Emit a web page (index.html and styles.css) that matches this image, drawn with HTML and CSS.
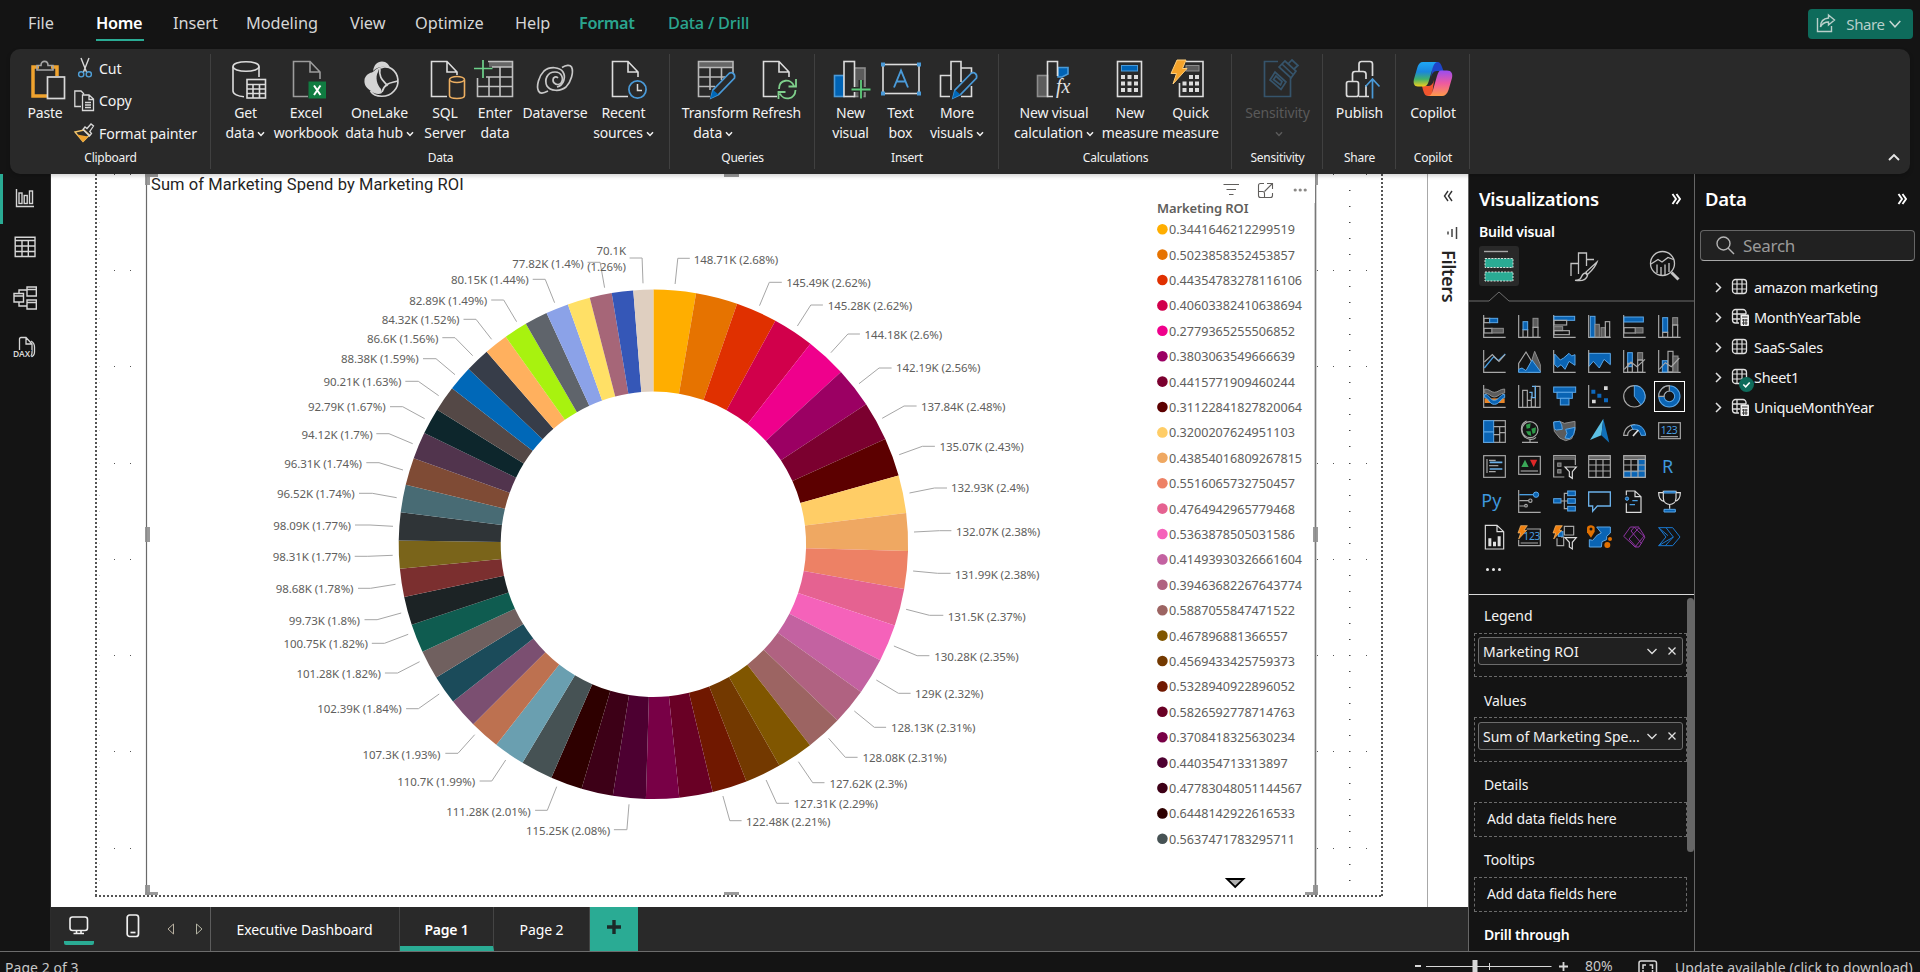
FILE: index.html
```html
<!DOCTYPE html>
<html lang="en">
<head>
<meta charset="utf-8">
<title>Report</title>
<link rel="stylesheet" href="styles.css">
</head>
<body>
<svg class="defs" width="0" height="0">
  <defs>
    <linearGradient id="cpA" x1="0" y1="0" x2="0" y2="1"><stop offset="0" stop-color="#1ea7f5"/><stop offset=".4" stop-color="#1a86dd"/><stop offset=".7" stop-color="#41b06a"/><stop offset="1" stop-color="#f2cf1c"/></linearGradient>
    <linearGradient id="cpB" x1="0" y1="0" x2="0" y2="1"><stop offset="0" stop-color="#9a4df0"/><stop offset=".5" stop-color="#ee5aa0"/><stop offset="1" stop-color="#ff9a4a"/></linearGradient>
    <symbol id="chev" viewBox="0 0 8 6"><path d="M1 1.2L4 4.4L7 1.2" fill="none" stroke="currentColor" stroke-width="1.5"/></symbol>
    <symbol id="expand" viewBox="0 0 10 12"><path d="M1.5 1L5 6L1.5 11M5.5 1L9 6L5.5 11" fill="none" stroke="currentColor" stroke-width="1.9"/></symbol>
    <symbol id="tbl" viewBox="0 0 18 18"><rect x="1.5" y="1.5" width="14" height="14" rx="3" fill="none" stroke="#e0e0e0" stroke-width="1.3"/><path d="M6 1.5V15.5M11 1.5V15.5M1.5 6H15.5M1.5 11H15.5" stroke="#e0e0e0" stroke-width="1.2"/></symbol>
    <symbol id="tblc" viewBox="0 0 18 18"><path d="M15 6V4.500a3 3 0 0 0-3-3H4.500a3 3 0 0 0-3 3V12a3 3 0 0 0 3 3H8M6 1.500V15M1.500 6H15M1.500 11H9" fill="none" stroke="#e0e0e0" stroke-width="1.3"/><rect x="9.500" y="6.500" width="8.500" height="11.500" rx="1" fill="#f0f0f0"/><path d="M11 9H16.500M11 12H16.500M11 15H16.500M12.600 11V17M15 11V17" stroke="#333" stroke-width="1"/></symbol>
  </defs>
</svg>

<header class="tabs">
  <nav class="menu">
    <span class="m file">File</span><span class="m home">Home</span><span class="m insert">Insert</span><span class="m modeling">Modeling</span><span class="m view">View</span><span class="m optimize">Optimize</span><span class="m help">Help</span><span class="m ctx format">Format</span><span class="m ctx drill">Data / Drill</span>
  </nav>
  <button class="share">
    <svg width="20" height="20" viewBox="0 0 20 20" fill="none" stroke="#b9cfca" stroke-width="1.4"><path d="M1.500 4V17.500H15.500V12M12.500 1L18.500 6L12.500 11V8C8.500 8 6 10 4.500 13C4.500 8 7.500 4.500 12.500 4Z"/></svg>
    <span>Share</span>
    <svg width="12" height="8" viewBox="0 0 12 8" fill="none" stroke="#c5d6d2" stroke-width="1.5"><path d="M.7 1L6 6.800L11.300 1"/></svg>
  </button>
</header>

<section class="ribbon">
  <div class="group clip">
    <div class="btns">
      <div class="b"><svg class="ic" viewBox="0 0 40 40" fill="none"><path d="M14 7H8V36H24M26 7H32V16" stroke="#f0a32e" stroke-width="3.500"/><path d="M12 10V5.500H16C16 0 23 0 23 5.500H28V10Z" stroke="#a6a6a6" stroke-width="1.600"/><rect x="22.500" y="17" width="17" height="21.500" fill="#292929" stroke="#d8d8d8" stroke-width="1.700"/></svg><span>Paste</span></div>
      <div class="small">
        <div><svg width="22" height="22" viewBox="0 0 22 22" fill="none" stroke-width="1.400"><path d="M7 1L12.500 15M15 1L9.500 15" stroke="#d8d8d8"/><circle cx="7.200" cy="17.300" r="2.600" stroke="#4f9fd8"/><circle cx="14.800" cy="17.300" r="2.600" stroke="#4f9fd8"/></svg>Cut</div>
        <div><svg width="22" height="22" viewBox="0 0 22 22" fill="none" stroke="#d8d8d8" stroke-width="1.300"><path d="M7 16.500H.8V1H7L10 4M8.500 5H15L19.500 9V20.500H8.500ZM15 5V9.500H19.500M11 12.500H17M11 15H17M11 17.500H17"/></svg>Copy</div>
        <div><svg width="22" height="22" viewBox="0 0 22 22" fill="none"><path d="M1 10L9 19.500L15.500 13L10 8Z" fill="#2a2a2a" stroke="#f2c46b" stroke-width="1.300"/><path d="M3 12.500L14 14.500L9 20Z" fill="#f0a32e"/><path d="M9 7.500L15.500 14L17.500 11.500L15.800 9.500L19.500 4L17 2L13 6.500L11 5Z" stroke="#d8d8d8" stroke-width="1.300"/></svg>Format painter</div>
      </div>
    </div>
    <div class="gl">Clipboard</div>
  </div>

  <div class="group data">
    <div class="btns">
      <div class="b"><svg class="ic" viewBox="0 0 40 40" fill="none" stroke="#dcdcdc" stroke-width="1.600"><ellipse cx="20" cy="6.500" rx="13" ry="4.800"/><path d="M7 6.500V31C7 34 12 36.500 18 36.700M33 6.500V17"/><rect x="21" y="19.500" width="18.500" height="18.500" fill="#292929"/><path d="M21 24.500H39.500M21 29H39.500M21 33.500H39.500M27 24V38M33.500 24V38"/></svg><span>Get<br>data<svg class="cv"><use href="#chev"/></svg></span></div>
      <div class="b"><svg class="ic" viewBox="0 0 40 40" fill="none"><path d="M22 36.500H7.500V1.500H24L34 12V19M24 1.500V12H34" stroke="#9c9c9c" stroke-width="1.600"/><rect x="22.500" y="21.500" width="17.500" height="17" fill="#107c41"/><path d="M28 25.500L34.500 35M34.500 25.500L28 35" stroke="#fff" stroke-width="2"/></svg><span>Excel<br>workbook</span></div>
      <div class="b lake"><svg class="ic" viewBox="0 0 40 40" fill="none"><path d="M12 11C13 5 16 1.500 21 1.500C25.500 1.500 28 4.500 29 8C24 6 17 6 12 11Z" fill="#d4d4d4"/><path d="M11 12.500C16 8.500 19 9 17 12C14 17 16 25 20 29L21 33C18 35 13 34 10 31C5 28 3 24 3.500 20C3.500 17 7 13 11 12.500Z" fill="#d4d4d4"/><path d="M14 11C20 6 27 6 31 9C38 14 39 25 33 31C27 38 14 38 9.500 31M21 32C24 22 31 23 36.500 21M19 9C17 18 24 22 26.500 26" stroke="#d4d4d4" stroke-width="1.700"/></svg><span>OneLake<br>data hub<svg class="cv"><use href="#chev"/></svg></span></div>
      <div class="b"><svg class="ic" viewBox="0 0 40 40" fill="none"><path d="M22 36.500H6.500V1.500H22L32 12V15M22 1.500V12H32" stroke="#dcdcdc" stroke-width="1.600"/><path d="M24.500 20V35.500C24.500 39.500 39.500 39.500 39.500 35.500V20" stroke="#eeb062" stroke-width="1.600" fill="#292929"/><ellipse cx="32" cy="19.500" rx="7.500" ry="3" stroke="#eeb062" stroke-width="1.600" fill="#292929"/></svg><span>SQL<br>Server</span></div>
      <div class="b"><svg class="ic" viewBox="0 0 40 40" fill="none"><rect x="14" y="2" width="23" height="5" fill="#666" /><path d="M2.500 18V36.500H37.500V1.500H13M11 17H37.500M2.500 26.500H37.500M14 17V36.500M25 7.500V36.500M17 7H37.500" stroke="#c0c0c0" stroke-width="1.600"/><path d="M8 0V18M-1 8.500H17.500" stroke="#6dd28a" stroke-width="1.700"/></svg><span>Enter<br>data</span></div>
      <div class="b"><svg class="ic" viewBox="0 0 40 40" fill="none" stroke="#c8c8c8" stroke-width="1.700"><path d="M27 7.500C31 5 35 4.500 36.500 7C39 12 36 22 31 27C25 32 15 31 12 26C9 20 12 12 20 12C27 12 29 19 26 23C23 26 18 24 18 20C18 17 21 16 23 18"/><path d="M13 31C8 33.500 5 34 3.500 31C1 26 4 16 9 11C15 6 25 7 28 12C31 17 29 25 22 27"/></svg><span>Dataverse</span></div>
      <div class="b"><svg class="ic" viewBox="0 0 40 40" fill="none"><path d="M24 36.500H8.500V1.500H24L34 12V17M24 1.500V12H34" stroke="#dcdcdc" stroke-width="1.600"/><circle cx="33.500" cy="29.500" r="8.600" stroke="#4a9ad8" stroke-width="1.700"/><path d="M33.500 24V30.500H38" stroke="#dcdcdc" stroke-width="1.500"/></svg><span>Recent<br>sources<svg class="cv"><use href="#chev"/></svg></span></div>
    </div>
    <div class="gl">Data</div>
  </div>

  <div class="group queries">
    <div class="btns">
      <div class="b"><svg class="ic" viewBox="0 0 40 40" fill="none"><rect x="4" y="2" width="34" height="5" fill="#666"/><path d="M15 36.500H3.500V1.500H38V14M3.500 7.500H38M3.500 17H30M3.500 26.500H20M15 7.500V30M26.500 7.500V20" stroke="#b8b8b8" stroke-width="1.600"/><path d="M34 13.500L18 30L16 38L23.500 34.500L39.500 18C40.500 14 37 11.500 34 13.500Z" fill="#292929" stroke="#4a9ad8" stroke-width="1.700"/><path d="M18 30L15.500 38.500L23.500 34.500Z" fill="#0068b8"/></svg><span>Transform<br>data<svg class="cv"><use href="#chev"/></svg>&nbsp;</span></div>
      <div class="b"><svg class="ic" viewBox="0 0 40 40" fill="none"><path d="M20 36.500H6.500V1.500H22L32 12V17M22 1.500V12H32" stroke="#dcdcdc" stroke-width="1.600"/><path d="M22 29C22 19 34 18 37 26M39 19V26.500H31.500M38.500 30C38 40 26 41 23 33.500M21.500 39V32H28.500" stroke="#7fd08c" stroke-width="1.800"/></svg><span>Refresh</span></div>
    </div>
    <div class="gl">Queries</div>
  </div>

  <div class="group insert">
    <div class="btns">
      <div class="b"><svg class="ic" viewBox="0 0 40 40" fill="none" stroke-width="1.600"><rect x="23" y="8" width="11" height="28.500" fill="#5c5c5c" stroke="#8c8c8c"/><rect x="3.500" y="15.500" width="9.500" height="21" fill="#0063b5" stroke="#4a9ad8"/><rect x="13" y="1.500" width="10.500" height="35" fill="#292929" stroke="#dcdcdc"/><path d="M30 20V38.500M20.500 29.500H39.500" stroke="#292929" stroke-width="5"/><path d="M30 20V38.500M20.500 29.500H39.500" stroke="#5dcc7a" stroke-width="1.800"/></svg><span>New<br>visual</span></div>
      <div class="b"><svg class="ic" viewBox="0 0 40 40" fill="none"><rect x="2" y="4.500" width="36" height="29" stroke="#dcdcdc" stroke-width="1.600"/><path d="M0 2.500h4v4h-4zM36 2.500h4v4h-4zM0 31.500h4v4h-4zM36 31.500h4v4h-4z" fill="#4a9ad8"/><path d="M13 27.500L20 10.500L27 27.500M15.500 21.500H24.500" stroke="#4a9ad8" stroke-width="1.900"/></svg><span>Text<br>box</span></div>
      <div class="b"><svg class="ic" viewBox="0 0 40 40" fill="none" stroke-width="1.600"><path d="M13 36.500H3.500V15.500H13.500M14 30V1.500H24V22M24 8H34.500V14M34.500 26V36.500H24" stroke="#dcdcdc"/><path d="M34 13.500L18 30L16 38L23.500 34.500L39.500 18C40.500 14 37 11.500 34 13.500Z" fill="#292929" stroke="#4a9ad8" stroke-width="1.700"/><path d="M18 30L15.500 38.500L23.500 34.500Z" fill="#0068b8"/></svg><span>More<br>visuals<svg class="cv"><use href="#chev"/></svg></span></div>
    </div>
    <div class="gl">Insert</div>
  </div>

  <div class="group calc">
    <div class="btns">
      <div class="b"><svg class="ic" viewBox="0 0 40 40" fill="none" stroke-width="1.600"><path d="M24 7.500H34V14L28 17H24Z" fill="#0063b5" stroke="#4a9ad8"/><rect x="3.500" y="15.500" width="10" height="21" fill="#5c5c5c" stroke="#8c8c8c"/><path d="M23.500 16V1.500H13.500V36.500H19" stroke="#dcdcdc"/><text x="22" y="33" class="fx">fx</text></svg><span>New visual<br>calculation<svg class="cv"><use href="#chev"/></svg></span></div>
      <div class="b"><svg class="ic" viewBox="0 0 40 40" fill="none"><rect x="7.500" y="1.500" width="24" height="35" stroke="#dcdcdc" stroke-width="1.600"/><rect x="11.500" y="5.500" width="16" height="5.500" fill="#0063b5" stroke="#4a9ad8"/><path d="M11 15h4v4h-4zM17.500 15h4v4h-4zM24 15h4v4h-4zM11 21.500h4v4h-4zM17.500 21.500h4v4h-4zM24 21.500h4v4h-4zM11 28h4v4h-4zM17.500 28h4v4h-4zM24 28h4v4h-4z" fill="#dcdcdc"/></svg><span>New<br>measure</span></div>
      <div class="b"><svg class="ic" viewBox="0 0 40 40" fill="none"><path d="M15 1.500H32V36.500H8.500V23" stroke="#dcdcdc" stroke-width="1.600"/><rect x="15" y="5.500" width="13" height="5.500" fill="#5c5c5c" stroke="#8c8c8c"/><path d="M18 15h4v4h-4zM24 15h4v4h-4zM11.500 21.500h4v4h-4zM18 21.500h4v4h-4zM24 21.500h4v4h-4zM11.500 28h4v4h-4zM18 28h4v4h-4zM24 28h4v4h-4z" fill="#dcdcdc"/><path d="M6 0H15L11.500 8.500H16L2 24L5.500 13.500H0Z" fill="#f5a32a" stroke="#ffce7a"/></svg><span>Quick<br>measure</span></div>
    </div>
    <div class="gl">Calculations</div>
  </div>

  <div class="group one">
    <div class="btns">
      <div class="b off"><svg class="ic" viewBox="0 0 40 40" fill="none" stroke="#36546b" stroke-width="1.700"><path d="M20 1.500H6.500V36.500H32.500V18"/><path d="M12 20L17 12L28 22L23 29.500ZM15.500 19.500L18 16L24 21.500L22.500 25Z"/><path d="M21 7L27 1L38 11L33 18ZM24.500 4.500L35.500 15M30 4L34 0L40 5.500L36 9"/></svg><span>Sensitivity<br><svg class="cv"><use href="#chev"/></svg></span></div>
    </div>
    <div class="gl">Sensitivity</div>
  </div>
  <div class="group two">
    <div class="btns">
      <div class="b"><svg class="ic" viewBox="0 0 40 40" fill="none" stroke="#dcdcdc" stroke-width="1.700"><rect x="6.500" y="21.500" width="12" height="15" rx="2"/><path d="M12.500 21V14C12.500 12.500 13.500 11.500 15 11.500H23C25 11.500 26 12.500 26 14V19M19 36.500H29M19 11V4C19 2.500 20 1.500 21.500 1.500H30C31.500 1.500 32.500 2.500 32.500 4V16M26 25V36"/><path d="M32.500 38.500V19M25.500 26.500L32.500 19L39.500 26.500" stroke="#4a9ad8"/></svg><span>Publish</span></div>
    </div>
    <div class="gl">Share</div>
  </div>
  <div class="group two last">
    <div class="btns">
      <div class="b"><svg class="ic" viewBox="0 0 40 40"><path d="M20 2H24.500C27 2 28 4 29 7L30.500 11H24C20 11 19 14 18 18Z" fill="#1f45c9"/><path d="M19 36H15C12 36 11 33 10 30L9 26H15C18 26 20 24 21 20Z" fill="#f0552e"/><path d="M10 2H25C22 2 21 4 20 7L15.500 22C14.500 25 13 26.500 10 26.500H5C1 26.500 0 23 1 19L4.500 7C5.500 4 7 2 10 2Z" fill="url(#cpA)"/><path d="M28 10.500H34C38.500 10.500 40 14 39 18L35.500 30C34 34 32 36 29 36H14.500C18 36 19 33 20 30L24 16C25 12.500 26 10.500 28 10.500Z" fill="url(#cpB)"/></svg><span>Copilot</span></div>
    </div>
    <div class="gl">Copilot</div>
  </div>
  <svg class="collapse" viewBox="0 0 12 8"><path d="M1 7L6 2L11 7" fill="none" stroke="#e6e6e6" stroke-width="1.900"/></svg>
</section>

<main class="work">
  <aside class="rail">
    <div class="r on"><svg width="24" height="24" viewBox="0 0 24 24" fill="none" stroke="#d6d6d6" stroke-width="1.400"><path d="M3.500 3V20.500H21"/><rect x="6" y="7" width="3" height="10.500"/><rect x="11.200" y="9.500" width="3" height="8"/><rect x="16.500" y="5" width="3" height="12.500"/></svg></div>
    <div class="r"><svg width="24" height="24" viewBox="0 0 24 24" fill="none" stroke="#d6d6d6" stroke-width="1.400"><path d="M2.200 2.200H22V21.500H2.200ZM2.200 5.500H22M2.200 11H22M2.200 16.500H22M9 5.500V21.500M15.300 5.500V21.500"/></svg></div>
    <div class="r"><svg width="24" height="24" viewBox="0 0 24 24" fill="none" stroke="#d6d6d6" stroke-width="1.400"><path d="M1 7.500H10.500V16H1ZM1 10H10.500M14 1H23.300V10H14ZM14 3.500H23.300M14 14H23.300V23H14ZM14 16.500H23.300M6 7.500V4H14M6 16V20H14"/></svg></div>
    <div class="r"><svg width="26" height="24" viewBox="0 0 26 24" fill="none" stroke="#d6d6d6" stroke-width="1.300"><path d="M6.500 14V3C6.500 2 7 1.500 8 1.500H13L19 8V17C19 18.500 18.500 19.500 17.500 20M13 1.500V8H19M18 5C20.500 6.500 21.500 8 21.500 11V16C21.500 19 20 20.500 17.500 20.800"/><text class="dax" x="0" y="21">DAX</text></svg></div>
  </aside>

  <div class="center">
    <div class="stage">
      <svg class="canvas" id="canvas" viewBox="51 174 1376 733" width="1376" height="733"></svg>
      <div class="filters">
        <svg width="10" height="12" viewBox="0 0 10 12"><path d="M5 1L1.500 6L5 11M9 1L5.500 6L9 11" fill="none" stroke="#333" stroke-width="1.400"/></svg>
        <svg class="ff" width="12" height="12" viewBox="0 0 12 12"><path d="M10.500 0V12M6 2V10M2 4.500V7.500" fill="none" stroke="#444" stroke-width="1.500"/></svg>
        <span>Filters</span>
      </div>
    </div>
    <div class="pages">
      <div class="ctl">
        <div class="mon"><svg width="20" height="19" viewBox="0 0 20 19" fill="none" stroke="#f0f0f0" stroke-width="1.600"><rect x="1" y="1" width="17.500" height="13.500" rx="2.500"/><path d="M7.500 14.500V17.500M12 14.500V17.500M4.500 17.500H15"/></svg></div>
        <svg class="phone" width="14" height="24" viewBox="0 0 14 24" fill="none" stroke="#f0f0f0" stroke-width="1.700"><rect x="1.200" y="1" width="11.300" height="21.500" rx="2.500"/><path d="M4.500 18.500H9.500"/></svg>
        <svg class="tri" width="8" height="12" viewBox="0 0 8 12" fill="none" stroke="#b8b0a0"><path d="M6.500 1V11L1 6Z"/></svg>
        <svg class="tri2" width="8" height="12" viewBox="0 0 8 12" fill="none" stroke="#b4b4a4"><path d="M1.500 1V11L7 6Z"/></svg>
      </div>
      <div class="pg p1">Executive Dashboard</div>
      <div class="pg p2">Page 1</div>
      <div class="pg p3">Page 2</div>
      <div class="add"><svg width="14" height="14" viewBox="0 0 14 14"><path d="M7 0V14M0 7H14" stroke="#1c2a28" stroke-width="3.400"/></svg></div>
    </div>
  </div>

  <section class="viz">
    <div class="ph"><h2>Visualizations</h2><svg width="10" height="12"><use href="#expand"/></svg></div>
    <h3>Build visual</h3>
    <div class="modes">
      <div class="mode sel"><svg width="30" height="32" viewBox="0 0 30 32"><path d="M0 1.500H24" stroke="#a8a8a8" stroke-width="1.400"/><rect x="1" y="8.500" width="28" height="9" fill="#2aab94" stroke="#d8ded9" stroke-dasharray="2 1.200"/><rect x="1" y="22" width="28" height="9" fill="#2aab94" stroke="#d8ded9" stroke-dasharray="2 1.200"/></svg></div>
      <svg class="m2" width="28" height="30" viewBox="0 0 28 30" fill="none" stroke="#c4c4c4" stroke-width="1.300"><path d="M1 24V11.500H8.500M8.500 22V1H16.500V14M16.500 7.500H24M27 10L16 20L17.500 22.500C20 20 25 16 27 10ZM15.500 21C12 21 12 25 10 27C9 28 7 28.300 5 28.300C9 29 16 29 17.500 23.500Z"/></svg>
      <svg class="m3" width="32" height="32" viewBox="0 0 32 32" fill="none" stroke="#c4c4c4" stroke-width="1.300"><circle cx="13.500" cy="13.500" r="12"/><path d="M2 14L9 9.500L13 12L19 7.500L24.500 9.500M8 14.500V23M12 17V25.500M16 14.500V25M20 13V22"/><path d="M22.500 22.500L29.500 29.500" stroke-width="3"/></svg>
    </div>
    <svg class="notch" width="225" height="11" viewBox="0 0 225 11"><path d="M0 10H20L30 1L40 10H225" fill="none" stroke="#6c6c6c" stroke-width="1"/></svg>
    <div class="grid" id="grid">
      <svg viewBox="0 0 69 69"><path class="a" d="M2 0V67H68"/><rect class="g" x="3" y="10" width="17" height="13"/><rect class="b" x="20" y="10" width="24" height="13"/><rect class="g" x="3" y="40" width="24" height="14"/><rect class="d" x="27" y="40" width="34" height="14"/></svg>
      <svg viewBox="0 0 69 69"><path class="a" d="M2 0V67H68"/><rect class="g" x="15" y="44" width="14" height="23"/><rect class="b" x="15" y="20" width="14" height="24"/><rect class="d" x="45" y="10" width="15" height="27"/><rect class="g" x="45" y="37" width="15" height="30"/></svg>
      <svg viewBox="0 0 69 69"><path class="a" d="M2 0V67H68"/><rect class="b" x="3" y="4" width="62" height="12"/><rect class="g" x="3" y="16" width="38" height="14"/><rect class="d" x="3" y="35" width="26" height="12"/><rect class="g" x="3" y="47" width="46" height="12"/></svg>
      <svg viewBox="0 0 69 69"><path class="a" d="M2 0V67H68"/><rect class="b" x="7" y="4" width="14" height="62"/><rect class="d" x="21" y="28" width="13" height="38"/><rect class="d" x="39" y="38" width="13" height="28"/><rect class="g" x="52" y="20" width="13" height="46"/></svg>
      <svg viewBox="0 0 69 69"><path class="a" d="M2 0V67H68"/><rect class="b" x="3" y="6" width="58" height="15"/><rect class="g" x="3" y="38" width="34" height="16"/><rect class="d" x="37" y="38" width="23" height="16"/></svg>
      <svg viewBox="0 0 69 69"><path class="a" d="M2 0V67H68"/><rect class="b" x="14" y="8" width="15" height="44"/><rect class="g" x="14" y="52" width="15" height="15"/><rect class="d" x="44" y="8" width="15" height="22"/><rect class="g" x="44" y="30" width="15" height="37"/></svg>

      <svg viewBox="0 0 69 69"><path class="a" d="M2 0V67H68"/><path class="lb" d="M4 54L32 20L46 32L67 12"/><path class="g" d="M4 36L28 14L48 34L66 14"/></svg>
      <svg viewBox="0 0 69 69"><path class="d" d="M30 67L50 4L67 44V67Z"/><path class="g" d="M2 67V40L24 6L42 36"/><path class="b" d="M2 67V58L12 54L24 62L42 30L67 64V67Z"/></svg>
      <svg viewBox="0 0 69 69"><path class="a" d="M2 0V67H68"/><path class="b" d="M5 12L22 30L32 24L48 10L56 18L66 14V46L48 34L36 58L24 44L14 52L5 44Z"/></svg>
      <svg viewBox="0 0 69 69"><path class="b" d="M2 10H67V44L48 28L34 54L16 34L2 50Z"/><path class="a" d="M2 0V67H68"/></svg>
      <svg viewBox="0 0 69 69"><path class="a" d="M2 0V67H68"/><rect class="b" x="14" y="8" width="14" height="42"/><rect class="g" x="14" y="40" width="14" height="27"/><rect class="d" x="44" y="8" width="15" height="22"/><rect class="g" x="44" y="30" width="15" height="37"/><path class="g" d="M4 58L24 36L42 50L66 28"/></svg>
      <svg viewBox="0 0 69 69"><path class="a" d="M2 0V67H68"/><rect class="b" x="13" y="32" width="16" height="34"/><rect class="g" x="30" y="4" width="15" height="62"/><rect class="d" x="45" y="18" width="15" height="48"/><path class="g" d="M4 58L22 38L40 50L64 24"/></svg>

      <svg viewBox="0 0 69 69"><path class="a" d="M2 0V67H68"/><path d="M5 40H65V54H5Z" fill="#e8862a"/><path class="d" d="M5 12C20 12 24 22 34 22C46 22 50 12 65 12V24C50 24 46 36 34 36C22 36 20 24 5 24Z"/><path class="b" d="M5 28C20 28 20 46 34 46C48 46 50 28 65 28V38C54 38 50 58 34 58C18 58 18 38 5 38Z"/></svg>
      <svg viewBox="0 0 69 69"><path class="a" d="M2 0V67H68"/><path class="g" d="M14 66V16H28V66M28 46H40V66M52 66V4H66V66M52 66H40V34"/><path d="M42 4H52V38H42V22H34" fill="none" stroke="#6bb0e8" stroke-width="4"/></svg>
      <svg viewBox="0 0 69 69"><rect class="b" x="2" y="6" width="66" height="16"/><rect class="b" x="12" y="22" width="46" height="18"/><rect class="b" x="22" y="40" width="26" height="20"/></svg>
      <svg viewBox="0 0 69 69"><path class="a" d="M2 0V67H68"/><path d="M10 14h12v12h-12zM28 26h12v12h-12zM48 40h12v12h-12z" fill="#0d68bd"/><path d="M48 4h11v11h-11zM12 44h11v11h-11z" fill="#d8d8d8"/></svg>
      <svg viewBox="0 0 69 69"><circle class="g" cx="34" cy="34" r="32"/><path class="b" d="M34 2A32 32 0 0 1 54 59L34 34Z"/></svg>
      <svg class="picked" viewBox="0 0 69 69"><circle cx="34" cy="34" r="24" fill="none" stroke="#5aa6e6" stroke-width="19"/><circle cx="34" cy="34" r="24" fill="none" stroke="#0a64b4" stroke-width="13"/><path class="g hole" d="M34 2V18A16 16 0 0 0 18 34H2A32 32 0 0 1 34 2Z"/></svg>

      <svg viewBox="0 0 69 69"><rect class="g" x="2" y="2" width="65" height="65"/><rect class="b" x="2" y="2" width="30" height="34"/><rect class="b" x="2" y="36" width="30" height="31"/><path class="g" d="M32 20H67M50 20V67M32 44H50M50 38H67"/></svg>
      <svg viewBox="0 0 69 69"><circle class="g" cx="36" cy="29" r="24"/><path d="M24 14L38 10L36 24L26 26ZM40 26L54 22L52 38L44 42ZM24 34L38 34L40 48L30 44Z" fill="#2e9a48"/><path class="g" d="M26 3C2 12 6 52 36 58C44 59 50 56 54 52M36 58V66M12 67H60"/></svg>
      <svg viewBox="0 0 69 69"><path class="d" d="M2 6L20 4L34 10L66 4V30L56 56L38 62L20 54L4 34Z"/><path class="b" d="M2 6L20 4L26 14L28 28L10 30L4 26ZM38 28L66 22L62 44L50 56L36 54L42 40Z"/></svg>
      <svg viewBox="0 0 69 69"><path d="M46 -4L6 60L40 46Z" fill="#5cc0e4"/><path d="M46 -4L64 68L40 46Z" fill="#1070b8"/></svg>
      <svg viewBox="0 0 69 69"><path class="g" d="M2 46C4 24 20 14 34 14L36 26C24 28 14 34 14 46Z"/><path class="b" d="M24 17C48 8 66 24 68 46H54C52 34 42 26 30 28Z"/><path d="M30 48L46 30" stroke="#e0e0e0" stroke-width="5"/></svg>
      <svg viewBox="0 0 69 69"><rect class="g" x="2" y="8" width="65" height="48"/><path class="g" d="M8 50H60"/><text class="n" x="8" y="42">123</text></svg>

      <svg viewBox="0 0 69 69"><rect class="g" x="2" y="2" width="65" height="65"/><path class="g" d="M12 12V54M18 16H38M18 50H38"/><path d="M20 22H58M20 42H58" stroke="#6bb0e8" stroke-width="5"/><path class="g" d="M18 32H46"/></svg>
      <svg viewBox="0 0 69 69"><rect class="g" x="2" y="4" width="65" height="54"/><path d="M10 36L21 14L32 36Z" fill="#3aa858"/><path d="M36 14H58L47 36Z" fill="#e02828"/><path class="g" d="M8 48H60"/></svg>
      <svg viewBox="0 0 69 69"><path class="g" d="M34 66H2V2H67V30M2 12H67"/><path d="M2 7H67" stroke="#666" stroke-width="6"/><rect class="d" x="14" y="24" width="10" height="10"/><rect class="d" x="14" y="44" width="10" height="10"/><path class="w" d="M36 36H70L58 50V70L49 64V50Z"/></svg>
      <svg viewBox="0 0 69 69"><path d="M2 7H67" stroke="#666" stroke-width="8"/><path class="g" d="M2 2H67V67H2ZM2 13H67M2 30H67M2 48H67M24 13V67M45 13V67"/></svg>
      <svg viewBox="0 0 69 69"><path d="M2 7H67" stroke="#666" stroke-width="8"/><path class="b" d="M45 13H67V67H2V50H45Z"/><path class="g" d="M2 2H67V67H2ZM2 13H67M2 30H67M2 48H67M24 13V67M45 13V67"/></svg>
      <svg viewBox="0 0 69 69"><text class="rr" x="12" y="54">R</text></svg>

      <svg viewBox="0 0 69 69"><text class="rr" x="-5" y="52">Py</text></svg>
      <svg viewBox="0 0 69 69"><path class="a" d="M2 0V67H68"/><path class="lb" d="M4 14H48"/><circle class="b" cx="54" cy="14" r="8"/><path class="g" d="M4 32H32M4 48H20"/><circle class="g" cx="37" cy="32" r="5"/><circle class="g" cx="24" cy="47" r="4"/></svg>
      <svg viewBox="0 0 69 69"><rect class="b" x="2" y="26" width="22" height="13"/><rect class="b" x="44" y="3" width="23" height="14"/><rect class="b" x="44" y="26" width="23" height="14"/><rect class="b" x="44" y="49" width="23" height="14"/><path class="g" d="M24 33H44M34 33V10H44M34 33V56H44"/></svg>
      <svg viewBox="0 0 69 69"><path d="M2 6H67V48H28L14 64V48H2Z" fill="none" stroke="#6bb0e8" stroke-width="4"/></svg>
      <svg viewBox="0 0 69 69"><path class="w" d="M10 16V3H36L54 20V67H10V40M36 3V20H54"/><circle class="b" cx="12" cy="26" r="5"/><path class="lb" d="M28 32H44M20 44H36M36 32H44"/></svg>
      <svg viewBox="0 0 69 69"><path class="w" d="M16 4H54V24C54 50 16 50 16 24ZM16 8H2C2 24 6 32 18 34M54 8H67C67 24 62 32 50 34M35 44V56"/><path class="b" d="M18 4H52V9H18ZM18 58H52V66H18Z"/></svg>

      <svg viewBox="0 0 69 69"><path class="w" d="M7 1H42L62 20V72H7ZM42 1V20H62"/><path d="M16 40h9v24h-9zM30 50h9v14h-9zM44 34h9v30h-9z" fill="#e0e0e0"/></svg>
      <svg viewBox="0 0 69 69"><path class="g" d="M26 12H67V62H2V44M8 54H60"/><text class="n" x="16" y="46">123</text><path class="bolt" d="M8 2H28L18 16H26L2 42L8 24H0Z"/></svg>
      <svg viewBox="0 0 69 69"><path class="g" d="M34 4H62V30H34ZM12 40V62H32V36H24"/><rect class="b" x="16" y="20" width="14" height="14"/><path class="w" d="M36 38H70L58 52V72L49 66V52Z"/><path class="bolt" d="M8 2H28L18 16H26L2 42L8 24H0Z"/></svg>
      <svg viewBox="0 0 69 69"><path class="b" d="M26 6H67V24L56 34L56 44L42 50L40 66H4V44L14 46L28 30L40 24Z"/><path d="M-3 8C-3 -2 20 -2 20 8V20L9 38L-3 22Z" fill="#e07000"/><circle cx="9" cy="12" r="4.500" fill="#141414"/><circle cx="58" cy="60" r="9" fill="#e07000"/><circle cx="66" cy="42" r="6" fill="#e07000"/></svg>
      <svg viewBox="0 0 69 69"><path d="M22 6H34L44 17L56 28L66 36L48 66H36L24 54L2 34ZM34 6L24 18L56 56M48 8L18 42L40 66M48 8L64 32L36 66M34 6H48" fill="none" stroke="#8c34a0" stroke-width="3"/></svg>
      <svg viewBox="0 0 69 69"><path d="M2 8H44L66 36L44 62H2L24 36ZM24 8L46 36L2 62M2 8L30 32M46 36L22 62" fill="none" stroke="#1a78d0" stroke-width="3"/></svg>
    </div>
    <div class="more"><i></i><i></i><i></i></div>
    <div class="wells">
      <div class="wl">
        <h4>Legend</h4>
        <div class="well"><div class="chip"><span>Marketing ROI</span><svg width="10" height="7" viewBox="0 0 10 7"><path d="M.5 1L5 5.500L9.500 1"/></svg><svg class="x" width="8" height="8" viewBox="0 0 8 8"><path d="M.5.5L7.500 7.500M7.500.5L.5 7.500"/></svg></div></div>
        <h4 class="v">Values</h4>
        <div class="well v"><div class="chip"><span>Sum of Marketing Spe...</span><svg width="10" height="7" viewBox="0 0 10 7"><path d="M.5 1L5 5.500L9.500 1"/></svg><svg class="x" width="8" height="8" viewBox="0 0 8 8"><path d="M.5.5L7.500 7.500M7.500.5L.5 7.500"/></svg></div></div>
        <h4 class="d1">Details</h4>
        <div class="well e">Add data fields here</div>
        <h4 class="t">Tooltips</h4>
        <div class="well e">Add data fields here</div>
        <h4 class="dt">Drill through</h4>
      </div>
      <div class="sb"></div>
    </div>
  </section>

  <section class="fields">
    <div class="ph"><h2>Data</h2><svg width="10" height="12"><use href="#expand"/></svg></div>
    <div class="search"><svg width="19" height="19" viewBox="0 0 19 19" fill="none" stroke="#b4b4b4" stroke-width="1.400"><circle cx="7.500" cy="7.500" r="6.500"/><path d="M12 12L18 18"/></svg>Search</div>
    <ul>
      <li><svg class="c" viewBox="0 0 7 11"><path d="M1 1L5.500 5.500L1 10"/></svg><svg class="t"><use href="#tbl"/></svg>amazon marketing</li>
      <li><svg class="c" viewBox="0 0 7 11"><path d="M1 1L5.500 5.500L1 10"/></svg><svg class="t"><use href="#tblc"/></svg>MonthYearTable</li>
      <li><svg class="c" viewBox="0 0 7 11"><path d="M1 1L5.500 5.500L1 10"/></svg><svg class="t"><use href="#tbl"/></svg>SaaS-Sales</li>
      <li><svg class="c" viewBox="0 0 7 11"><path d="M1 1L5.500 5.500L1 10"/></svg><svg class="t"><use href="#tbl"/></svg>Sheet1<svg class="ok" viewBox="0 0 15 15"><circle cx="7.500" cy="7.500" r="7.500" fill="#0e6b5b"/><path d="M4.300 7.500L6.700 9.800L10.700 5.500" fill="none" stroke="#fff" stroke-width="1.600"/></svg></li>
      <li><svg class="c" viewBox="0 0 7 11"><path d="M1 1L5.500 5.500L1 10"/></svg><svg class="t"><use href="#tblc"/></svg>UniqueMonthYear</li>
    </ul>
  </section>
</main>

<footer class="status">
  <span class="pn">Page 2 of 3</span>
  <svg class="zoom" width="160" height="14" viewBox="0 0 160 14" stroke="#d8d8d8" fill="none"><path d="M1 7H7" stroke-width="2"/><path d="M12 7.500H137.500M75.500 4V11" stroke-width="1"/><rect x="58.500" y="1" width="5" height="13" fill="#d8d8d8" stroke="none"/><path d="M145 7.500H154M149.500 3V12" stroke-width="1.800"/></svg>
  <span class="pct">80%</span>
  <svg class="fit" width="20" height="13" viewBox="0 0 20 13" fill="none" stroke="#d8d8d8" stroke-width="1.500"><path d="M1 13V3A2 2 0 0 1 3 1H16A2 2 0 0 1 18.500 3V13M5 9V5H8M14.500 9V5H11.500M5 10V13H8M14.500 10V13H11.500"/></svg>
  <span class="upd">Update available (click to download)</span>
</footer>
<script src="chart.js"></script>
</body>
</html>
```

FILE: styles.css
```css
* { box-sizing: border-box; }
html, body { margin: 0; height: 972px; overflow: hidden; }
body { width: 1920px; background: #141414; color: #f2f2f2; font-family: "Noto Sans", "Open Sans", sans-serif; display: flex; flex-direction: column; }
.defs { position: absolute; }
svg { overflow: visible; flex: none; }
h2, h3, h4, ul { margin: 0; padding: 0; font-weight: 600; }

.tabs { height: 49px; flex: none; display: flex; justify-content: space-between; align-items: flex-start; padding: 9px 7px 0 28px; }
.menu { display: flex; font-size: 16.300px; line-height: 29px; color: #d6d6d6; letter-spacing: -.05px; }
.m { height: 32px; white-space: nowrap; flex: none; }
.file { width: 68px; }
.home { width: 48px; margin-right: 29px; color: #fff; font-weight: 600; border-bottom: 2px solid #2aab94; letter-spacing: -.3px; }
.insert { width: 73px; }
.modeling { width: 104px; }
.view { width: 65px; }
.optimize { width: 100px; }
.help { width: 64px; }
.format { width: 89px; }
.ctx { color: #2aa58f; font-weight: 500; letter-spacing: -.2px; }
.format { font-weight: 600; letter-spacing: -.35px; }
.share { width: 105px; height: 30px; padding: 0 12px 0 8px; border: 0; border-radius: 4px; background: #0e6b5b; color: #b8cfca; font: 15px "Noto Sans", sans-serif; letter-spacing: -.4px; display: flex; align-items: center; justify-content: space-between; }
.share span { margin: 0 -2px 0 4px; }

.ribbon { position: relative; height: 125px; width: 1900px; margin-left: 10px; flex: none; background: #292929; border-radius: 10px; display: flex; z-index: 2; box-shadow: 0 2px 4px rgba(0,0,0,.18); }
.group { position: relative; flex: none; display: flex; flex-direction: column; justify-content: space-between; padding: 11px 0 8px; }
.group::after { content: ""; position: absolute; right: 0; top: 5px; bottom: 5px; width: 1px; background: #404040; }
.gl { text-align: center; font-size: 12px; line-height: 16px; letter-spacing: -.25px; white-space: nowrap; }
.btns { display: grid; }
.b { display: flex; flex-direction: column; align-items: center; font-size: 14px; line-height: 20px; letter-spacing: -.15px; text-align: center; }
.b > span { white-space: nowrap; margin-top: 3px; }
.lake > span { margin-left: -3px; }
.ic { width: 40px; height: 40px; }
.cv { width: 8px; height: 6px; margin: 0 0 1px 3px; }
.off { color: #5a5a5a; }
.clip { width: 201px; }
.clip .btns { grid-template-columns: 40px 110px; padding-left: 15px; column-gap: 9px; height: 90px; }
.small { display: flex; flex-direction: column; font-size: 14.200px; letter-spacing: -.15px; margin-top: -8px; }
.small div { display: flex; align-items: center; gap: 3px; height: 32.500px; white-space: nowrap; }
.data { width: 459px; } .data .btns { grid-template-columns: 45px 76px 74px 54px 46px 74px 63px; padding-left: 12px; }
.queries { width: 145px; } .queries .btns { grid-template-columns: 66px 57px; padding-left: 12px; }
.insert.group { width: 184px; } .insert .btns { grid-template-columns: 41px 59px 54px; padding-left: 15px; }
.calc { width: 233px; } .calc .btns { grid-template-columns: 90px 62px 59px; padding-left: 10px; }
.one { width: 91px; }
.two { width: 73px; }
.last { width: 74px; }
.fx { font: italic 20px "Liberation Serif", serif; fill: #e0e0e0; stroke: none; }
.collapse { width: 12px; height: 8px; margin: 104px 0 0 auto; position: relative; right: 10px; }

.work { height: 777px; flex: none; display: flex; }
.rail { width: 51px; border-right: 1px solid #2c2c2c; flex: none; }
.r { height: 50px; display: flex; align-items: center; border-left: 3px solid transparent; padding-left: 10px; }
.r.on { border-color: #2aab94; padding-bottom: 2px; }
.r:nth-child(2) { padding-bottom: 4px; }
.r:nth-child(3), .r:nth-child(4) { padding-bottom: 3px; }
.dax { font: 600 8.500px "Noto Sans", sans-serif; fill: #d6d6d6; stroke: #141414; stroke-width: 2px; paint-order: stroke; }

.center { width: 1417px; flex: none; display: flex; flex-direction: column; }
.stage { height: 733px; background: #fff; display: flex; flex: none; }
.canvas { overflow: hidden; }
.filters { width: 41px; border-left: 1px solid #a8a8a8; padding: 16px 0 0 15px; color: #252423; display: flex; flex-direction: column; align-items: flex-start; }
.filters .ff { margin: 25px 0 0 3px; }
.filters span { writing-mode: vertical-rl; font-size: 18px; font-weight: 600; line-height: 20px; margin: 11px 0 0 -4px; letter-spacing: -.3px; }

.lbl { font-size: 11.500px; fill: #605e5c; letter-spacing: -.07px; }
.leg { font-size: 12.600px; fill: #605e5c; }
.legt { font-size: 13px; font-weight: 600; fill: #605e5c; letter-spacing: -.1px; }
.title { font-family: Roboto, sans-serif; font-size: 16.500px; fill: #252423; letter-spacing: .08px; }

.pages { height: 44px; background: #292929; display: flex; font-size: 14px; letter-spacing: -.1px; color: #fff; }
.ctl { width: 160px; display: flex; border-right: 1px solid #5c5c5c; padding-left: 13px; }
.mon { width: 30px; height: 38px; border-bottom: 4px solid #2aab94; border-radius: 2px; padding: 9px 0 0 5px; }
.phone { margin: 7px 0 0 32px; }
.tri { margin: 16px 0 0 27px; }
.tri2 { margin: 16px 0 0 20px; }
.pg { border-right: 1px solid #444; display: flex; align-items: center; justify-content: center; }
.p1 { width: 189px; padding-right: 1px; }
.p2 { width: 94px; font-weight: 600; border-bottom: 5px solid #2aab94; padding-top: 5px; letter-spacing: -.2px; }
.p3 { width: 96px; }
.add { width: 48px; background: #2aab94; display: flex; align-items: center; justify-content: center; padding-bottom: 4px; }

.viz { width: 227px; flex: none; border-left: 1px solid #666; border-right: 1px solid #666; display: flex; flex-direction: column; overflow: hidden; }
.ph { display: flex; justify-content: space-between; align-items: center; height: 24px; margin: 13px 13px 0 10px; color: #fff; flex: none; }
.ph h2 { font-size: 18.500px; line-height: 24px; letter-spacing: -.3px; }
.viz h3 { font-size: 14px; line-height: 20px; margin: 11px 0 0 10px; letter-spacing: -.2px; color: #fff; }
.modes { display: flex; margin: 4px 0 0 10px; height: 40px; flex: none; }
.mode { width: 40px; background: #292929; border-radius: 3px; padding: 4px 0 0 5px; }
.m2 { margin: 6px 0 0 51px; }
.m3 { margin: 4px 0 0 51px; }
.notch { margin-top: 5px; }
.grid { display: grid; grid-template-columns: repeat(6, 23px); grid-auto-rows: 23px; gap: 12px; margin: 13px 0 0 14px; flex: none; }
.grid svg { width: 23px; height: 23px; }
.grid .picked { outline: 1px solid #fff; outline-offset: 3px; }
.a, .g, .w, .lb { fill: none; stroke: #a8a8a8; stroke-width: 3.500; }
.w { stroke: #dcdcdc; }
.lb { stroke: #4a9ee0; stroke-width: 4; }
.grid .b { fill: #0a64b4; stroke: #5aa6e6; stroke-width: 3; }
.hole { fill: #141414; }
.d { fill: #5c5c5c; stroke: #8e8e8e; stroke-width: 3; }
.bolt { fill: #f08010; stroke: #ffc070; stroke-width: 2; }
.n { font: 31px "Noto Sans", sans-serif; fill: #4a9ee0; letter-spacing: -1px; }
.rr { font: 54px "Noto Sans", sans-serif; fill: #3f98dd; }
.more { display: flex; gap: 3px; margin: 20px 0 0 17px; height: 3px; flex: none; }
.more i { width: 3px; height: 3px; border-radius: 2px; background: #e8e8e8; }
.wells { border-top: 1px solid #d8d8d8; margin-top: 23px; height: 348px; flex: none; display: flex; }
.wl { width: 213px; margin-left: 5px; }
.wells h4 { font-weight: 400; font-size: 14px; line-height: 20px; letter-spacing: -.1px; margin: 11px 0 7px 10px; color: #f2f2f2; }
.well { border: 1px dashed #6a6a6a; height: 44px; padding: 3px; }
.wells h4.v { margin: 14px 0 6px 10px; }
.well.v { height: 45px; padding-top: 4px; }
.wells h4.d1 { margin-top: 13px; }
.wells .e { height: 35px; font-size: 14px; line-height: 32px; padding: 0 0 0 12px; letter-spacing: -.1px; }
.wells h4.t { margin-top: 13px; }
.wells h4.dt { font-weight: 600; margin: 13px 0 0 10px; height: 17px; overflow: hidden; letter-spacing: -.15px; color: #fff; }
.chip { width: 205px; height: 28px; border: 1px solid #6c6c6c; border-radius: 3px; background: #202020; display: flex; align-items: center; padding: 0 6px 0 4px; font-size: 14px; letter-spacing: 0; white-space: nowrap; }
.chip span { flex: 1; }
.chip svg { fill: none; stroke: #e0e0e0; stroke-width: 1.300; }
.chip .x { margin-left: 11px; }
.sb { width: 7px; height: 254px; margin-top: 3px; border-radius: 4px; background: #666; }

.fields { flex: 1; }
.search { margin: 19px 5px 0 5px; width: 215px; height: 31px; border: 1px solid #666; border-bottom-color: #a8a8a8; border-radius: 4px; background: #212121; color: #9a9a9a; font-size: 17px; letter-spacing: -.3px; display: flex; align-items: center; gap: 8px; padding: 0 0 0 15px; }
.fields ul { list-style: none; margin-top: 11px; font-weight: 400; font-size: 14.500px; }
.fields li { height: 30px; display: flex; align-items: center; padding-left: 20px; color: #f4f4f4; letter-spacing: -.3px; position: relative; }
.fields .c { width: 7px; height: 11px; fill: none; stroke: #e0e0e0; stroke-width: 1.500; margin-right: 9px; }
.fields .t { width: 18px; height: 18px; margin-right: 5px; }
.ok { position: absolute; left: 44px; top: 15px; width: 15px; height: 15px; }

.status { height: 21px; flex: none; border-top: 1px solid #6c6c6c; display: flex; overflow: hidden; color: #c8c8c8; font-size: 14px; line-height: 20px; white-space: nowrap; letter-spacing: .05px; }
.pn { width: 1409px; padding: 6px 0 0 5px; }
.zoom { margin: 7px 0 0 5px; }
.pct { margin: 4px 0 0 11px; width: 53px; }
.fit { margin-top: 8px; width: 20px; }
.upd { margin: 6px 0 0 17px; letter-spacing: .05px; }
```

FILE: chart.js
```js
const canvas = document.getElementById('canvas');
const NS = 'http://www.w3.org/2000/svg';
function add(tag, attrs, text) {
  const el = document.createElementNS(NS, tag);
  for (const k in attrs) el.setAttribute(k, attrs[k]);
  if (text) el.textContent = text;
  canvas.appendChild(el);
  return el;
}

// grid points and page outline
for (let k = 0; k < 8; k++) {
  const y = Math.round(173.8 + 96.25 * k);
  for (const x of [114, 130, 1317, 1333, 1366]) add('rect', { x, y, width: 1, height: 1, fill: '#555' });
}
for (let k = 1; k < 45; k++) {
  add('rect', { x: 1349, y: Math.round(173.8 + 16.04 * k), width: 1.5, height: 1, fill: '#444' });
  add('rect', { x: 99, y: Math.round(173.8 + 16.04 * k), width: 1, height: 1, fill: '#ddd' });
}
add('path', { d: 'M96 174V896M1382 174V896', stroke: '#555', 'stroke-width': 2, 'stroke-dasharray': '2 2', fill: 'none' });
add('path', { d: 'M95 896H1383', stroke: '#555', 'stroke-width': 2, 'stroke-dasharray': '2 2', fill: 'none' });

// selection frame and handles
add('path', { d: 'M146.5 174V895M1315.7 174V895', stroke: '#6a6a6a', 'stroke-width': 1.2, fill: 'none' });
add('path', { d: 'M1314.5 203V895', stroke: '#cfcfcf', 'stroke-width': 1, fill: 'none' });
for (const [x, y, w, h] of [[145, 174, 5, 11], [145, 174, 13, 3], [145, 527, 5, 15], [1313, 527, 5, 15], [724, 174, 15, 3], [724, 892, 15, 3], [145, 885, 5, 10], [145, 892, 13, 3], [1313, 885, 5, 10], [1305, 892, 13, 3], [1315, 174, 3, 11]])
  add('rect', { x, y, width: w, height: h, fill: '#8f8f8f', opacity: .9 });

// donut
const slices = [
  [2.68, '#ffae00'], [2.65, '#e67300'], [2.62, '#e03000'], [2.62, '#d1004b'], [2.6, '#ef008c'],
  [2.56, '#9b0063'], [2.48, '#7b002f'], [2.43, '#5c0000'], [2.4, '#ffcd66'], [2.38, '#efa862'],
  [2.38, '#ed8165'], [2.37, '#e56291'], [2.35, '#f562ba'], [2.32, '#c362a1'], [2.31, '#b06281'],
  [2.31, '#9c6462'], [2.3, '#805600'], [2.29, '#733900'], [2.21, '#701800'], [2.12, '#690025'],
  [2.09, '#780046'], [2.08, '#4d0031'], [2.0, '#3d0017'], [2.01, '#2e0000'], [2.03, '#465254'],
  [1.99, '#6a9fb0'], [1.93, '#bd7150'], [1.9, '#7b4f71'], [1.84, '#1b4b5a'], [1.82, '#70605f'],
  [1.82, '#0f5c50'], [1.8, '#1c2325'], [1.78, '#7b2f2f'], [1.77, '#7a641a'], [1.77, '#2f3437'],
  [1.74, '#486b74'], [1.74, '#7f4b35'], [1.7, '#51344d'], [1.67, '#0d262c'], [1.63, '#544846'],
  [1.59, '#0068b8'], [1.56, '#373d49'], [1.52, '#ffb05e'], [1.49, '#a8f20f'], [1.46, '#5f646b'],
  [1.44, '#8ba2e8'], [1.43, '#ffe066'], [1.4, '#a66678'], [1.36, '#3557b7'], [1.26, '#dfcfc0']
];
const total = slices.reduce((s, d) => s + d[0], 0);
const cx = 653.4, cy = 544.3, R = 254.7, r = 152.7;
const pt = (a, rad) => `${(cx + rad * Math.sin(a)).toFixed(2)} ${(cy - rad * Math.cos(a)).toFixed(2)}`;
let acc = 0;
for (const [v, color] of slices) {
  const a = acc / total * 2 * Math.PI;
  acc += v;
  const b = acc / total * 2 * Math.PI;
  add('path', { d: `M${pt(a, R)}A${R} ${R} 0 0 1 ${pt(b, R)}L${pt(b, r)}A${r} ${r} 0 0 0 ${pt(a, r)}Z`, fill: color });
}

// callouts: text, line start, elbow, line end x, text x, text middle y
const right = [
  ['148.71K (2.68%)', 675.1, 284, 677.8, 258.3, 689.8, 693.8, 259.7],
  ['145.49K (2.62%)', 759.5, 305.7, 769.3, 282.3, 781.8, 786.3, 282.7],
  ['145.28K (2.62%)', 797.4, 326, 810.8, 305, 822.9, 827.8, 305.7],
  ['144.18K (2.6%)', 830.9, 352.7, 847.9, 334, 859.9, 864.4, 334.7],
  ['142.19K (2.56%)', 859, 383.7, 879.1, 368, 891.6, 896, 368.3],
  ['137.84K (2.48%)', 882.2, 418.3, 904.1, 406, 916.6, 921, 406.7],
  ['135.07K (2.43%)', 899.2, 454.7, 922.4, 446.3, 934.9, 939.4, 446.7],
  ['132.93K (2.4%)', 909.5, 493, 934.5, 488, 947, 951, 488.3],
  ['132.07K (2.38%)', 914, 532, 939.4, 530.7, 951.4, 955.9, 531.7],
  ['131.99K (2.38%)', 913.1, 571, 937.6, 573.3, 950.6, 955.1, 574.7],
  ['131.5K (2.37%)', 906.1, 609.3, 929.4, 615.3, 943.3, 947.8, 616.7],
  ['130.28K (2.35%)', 893.9, 646, 917.1, 655.7, 929.4, 934.3, 656.7],
  ['129K (2.32%)', 876.3, 680, 898.4, 693.3, 910.6, 915.1, 693.7],
  ['128.13K (2.31%)', 854.3, 711, 874.3, 727.3, 886.1, 891, 727.7],
  ['128.08K (2.31%)', 828.6, 738.3, 845.3, 757.3, 857.6, 862.4, 758],
  ['127.62K (2.3%)', 798.4, 761.7, 812.7, 782.7, 824.5, 829.4, 783.7],
  ['127.31K (2.29%)', 766.1, 780, 776.7, 803.3, 789, 793.5, 803.7],
  ['122.48K (2.21%)', 722.9, 796, 729.8, 820.7, 741.6, 746.1, 821.7]
];
const left = [
  ['115.25K (2.08%)', 629, 804.3, 626.9, 829.7, 613.9, 610.2, 830.7],
  ['111.28K (2.01%)', 556.7, 786.7, 547.3, 810.3, 535.1, 530.6, 811.7],
  ['110.7K (1.99%)', 505.7, 760, 491.8, 781, 479.6, 475.1, 782],
  ['107.3K (1.93%)', 474.7, 734.7, 458, 753.3, 445.3, 440.4, 754.7],
  ['102.39K (1.84%)', 439.2, 694, 418.4, 708.7, 406.1, 401.6, 709],
  ['101.28K (1.82%)', 419.6, 661.7, 397.6, 673, 384.9, 380.8, 674],
  ['100.75K (1.82%)', 408.2, 634.3, 384.5, 643.3, 371.8, 367.8, 643.7],
  ['99.73K (1.8%)', 401.2, 613, 377.1, 619.7, 364.5, 360, 620.7],
  ['98.68K (1.78%)', 395.5, 584.3, 370.6, 588.3, 358, 353.5, 588.7],
  ['98.31K (1.77%)', 392.7, 555.3, 367.8, 556.3, 354.7, 350.6, 556.7],
  ['98.09K (1.77%)', 393, 526.3, 370, 525, 355, 351, 526],
  ['96.52K (1.74%)', 396.7, 497.7, 372.3, 493.3, 359, 354.7, 493.7],
  ['96.31K (1.74%)', 403, 470, 379, 462.7, 366.3, 362, 463.7],
  ['94.12K (1.7%)', 412.7, 443.7, 389, 433.7, 376.3, 372.7, 435],
  ['92.79K (1.67%)', 424.7, 418.7, 402.7, 406.7, 390, 385.7, 406.7],
  ['90.21K (1.63%)', 438.7, 395.7, 418.3, 381.3, 405.3, 401.3, 382],
  ['88.38K (1.59%)', 455, 374.7, 436, 358.7, 423, 418.7, 359],
  ['86.6K (1.56%)', 472.7, 355.7, 455, 337.7, 442.3, 438.3, 338.7],
  ['84.32K (1.52%)', 491.6, 339.3, 476, 319.3, 463.5, 459.5, 320],
  ['82.89K (1.49%)', 516.6, 321.7, 503.7, 300, 491.2, 487.1, 300.7],
  ['80.15K (1.44%)', 554.6, 302.7, 545.2, 279.3, 532.7, 528.7, 279.7],
  ['77.82K (1.4%)', 604.6, 287.7, 600.1, 262.3, 587.6, 583.6, 264],
  ['70.1K', 643, 283.3, 642.1, 258, 629.6, 626, 250.7]
];
function callout(d, anchor) {
  const [text, sx, sy, ex, ey, lx, tx, ty] = d;
  add('polyline', { points: `${sx},${sy} ${ex},${ey} ${lx},${ey}`, fill: 'none', stroke: '#a6a6a6', 'stroke-width': 1 });
  add('text', { x: tx, y: ty + 4, 'text-anchor': anchor, class: 'lbl' }, text);
}
right.forEach(d => callout(d, 'start'));
left.forEach(d => callout(d, 'end'));
add('text', { x: 626, y: 270.7, 'text-anchor': 'end', class: 'lbl' }, '(1.26%)');

// title and legend
add('text', { x: 151, y: 190, class: 'title' }, 'Sum of Marketing Spend by Marketing ROI');
add('text', { x: 1157, y: 213, class: 'legt' }, 'Marketing ROI');
const legend = ['0.3441646212299519', '0.5023858352453857', '0.44354783278116106', '0.40603382410638694', '0.2779365255506852',
  '0.3803063549666639', '0.4415771909460244', '0.31122841827820064', '0.3200207624951103', '0.43854016809267815',
  '0.5516065732750457', '0.4764942965779468', '0.5363878505031586', '0.41493930326661604', '0.39463682267643774',
  '0.5887055847471522', '0.467896881366557', '0.4569433425759373', '0.5328940922896052', '0.5826592778714763',
  '0.3708418325630234', '0.440354713313897', '0.47783048051144567', '0.6448142922616533', '0.5637471783295711'];
legend.forEach((t, i) => {
  const y = 229.2 + 25.4 * i;
  add('circle', { cx: 1162.4, cy: y, r: 5.3, fill: slices[i][1] });
  add('text', { x: 1169, y: y + 5, class: 'leg' }, t);
});
add('path', { d: 'M1227 879H1243.500L1235.200 887Z', fill: '#b0b0b0', stroke: '#000', 'stroke-width': 1.8 });

// visual header buttons
add('path', { d: 'M1223.5 184.500H1239M1226.500 189.500H1236M1229 194.500H1233.500', stroke: '#605e5c', 'stroke-width': 1.2, fill: 'none' });
add('path', { d: 'M1264 183.500H1260.500A2 2 0 0 0 1258.500 185.500V195.500A2 2 0 0 0 1260.500 197.500H1270.500A2 2 0 0 0 1272.500 195.500V193M1258.500 191.500H1262.500A2 2 0 0 1 1264.500 193.500V197.500M1264.500 191.500L1272 184M1267 183.500H1272.500V189', stroke: '#605e5c', 'stroke-width': 1.1, fill: 'none' });
for (const x of [1295.2, 1300.2, 1305.2]) add('circle', { cx: x, cy: 190, r: 1.6, fill: '#8a8886' });
```
